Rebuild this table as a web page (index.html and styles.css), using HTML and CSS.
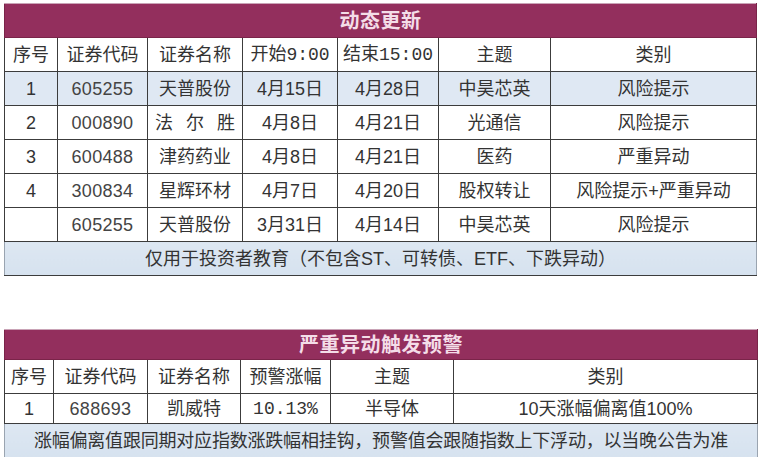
FILE: index.html
```html
<!DOCTYPE html>
<html lang="zh-CN">
<head>
<meta charset="utf-8">
<title>动态更新</title>
<link rel="stylesheet" href="styles.css">
</head>
<body>
<div class="page">
  <table class="grid grid-top">
    <colgroup>
      <col class="c53"><col class="c90"><col class="c95"><col class="c95"><col class="c101"><col class="c112"><col>
    </colgroup>
    <tr class="title"><td colspan="7">动态更新</td></tr>
    <tr class="head"><td>序号</td><td>证券代码</td><td>证券名称</td><td>开始<span class="mono">9:00</span></td><td>结束<span class="mono">15:00</span></td><td>主题</td><td>类别</td></tr>
    <tr class="row hl"><td>1</td><td class="num">605255</td><td>天普股份</td><td>4月15日</td><td>4月28日</td><td>中昊芯英</td><td>风险提示</td></tr>
    <tr class="row"><td>2</td><td class="num">000890</td><td class="spaced">法 尔 胜</td><td>4月8日</td><td>4月21日</td><td>光通信</td><td>风险提示</td></tr>
    <tr class="row"><td>3</td><td class="num">600488</td><td>津药药业</td><td>4月8日</td><td>4月21日</td><td>医药</td><td>严重异动</td></tr>
    <tr class="row"><td>4</td><td class="num">300834</td><td>星辉环材</td><td>4月7日</td><td>4月20日</td><td>股权转让</td><td>风险提示+严重异动</td></tr>
    <tr class="row"><td></td><td class="num">605255</td><td>天普股份</td><td>3月31日</td><td>4月14日</td><td>中昊芯英</td><td>风险提示</td></tr>
    <tr class="foot"><td colspan="7">仅用于投资者教育（不包含ST、可转债、ETF、下跌异动）</td></tr>
  </table>

  <table class="grid grid-bottom">
    <colgroup>
      <col class="c49"><col class="c94"><col class="c93"><col class="c90"><col class="c123"><col>
    </colgroup>
    <tr class="title t2"><td colspan="6">严重异动触发预警</td></tr>
    <tr class="head"><td>序号</td><td>证券代码</td><td>证券名称</td><td>预警涨幅</td><td>主题</td><td>类别</td></tr>
    <tr class="row r2"><td>1</td><td class="num">688693</td><td>凯威特</td><td class="mono">10.13%</td><td>半导体</td><td>10天涨幅偏离值100%</td></tr>
    <tr class="foot f2"><td colspan="6">涨幅偏离值跟同期对应指数涨跌幅相挂钩，预警值会跟随指数上下浮动，以当晚公告为准</td></tr>
  </table>
</div>
</body>
</html>
```

FILE: styles.css
```css
html, body {
  margin: 0;
  padding: 0;
  background: #ffffff;
}

.page {
  padding: 3px 2px 0 4px;
  display: flex;
  flex-direction: column;
  gap: 53px;
  font-family: "Liberation Sans", "Noto Sans CJK SC", sans-serif;
  color: #333333;
}

.grid {
  border-collapse: collapse;
  table-layout: fixed;
}

.grid-top { width: 753px; }
.grid-bottom { width: 754px; }

.c53 { width: 53px; }
.c90 { width: 90px; }
.c95 { width: 95px; }
.c101 { width: 101px; }
.c112 { width: 112px; }
.c49 { width: 49px; }
.c94 { width: 94px; }
.c93 { width: 93px; }
.c123 { width: 123px; }

.grid td {
  border: 1.5px solid #3c3c3c;
  text-align: center;
  vertical-align: middle;
  padding: 0;
  font-size: 18px;
  line-height: 20px;
  white-space: nowrap;
  overflow: hidden;
}

.title td {
  height: 33px;
  background: #932f5d;
  color: #f4dde8;
  font-size: 20px;
  font-weight: 700;
  letter-spacing: 0.5px;
  border-color: #7a2449;
  border-top-color: #c9a3b6;
}

.head td {
  height: 33px;
  background: #ffffff;
}

.row td {
  height: 33px;
  background: #ffffff;
}

.row.hl td {
  background: #dfe8f3;
}

.num {
  color: #444444;
  letter-spacing: 0.3px;
}

.mono {
  font-family: "Liberation Mono", "Noto Sans CJK SC", monospace;
}

.spaced {
  word-spacing: 8px;
}

.foot td {
  height: 33px;
  background: linear-gradient(#dde7f2, #d6e2ef);
  border-left-color: #9aa4b0;
  border-right-color: #9aa4b0;
}

.t2 td {
  height: 29px;
}

.r2 td {
  height: 29px;
}

.f2 td {
  height: 34px;
  font-size: 18px;
  letter-spacing: -0.2px;
}
```
